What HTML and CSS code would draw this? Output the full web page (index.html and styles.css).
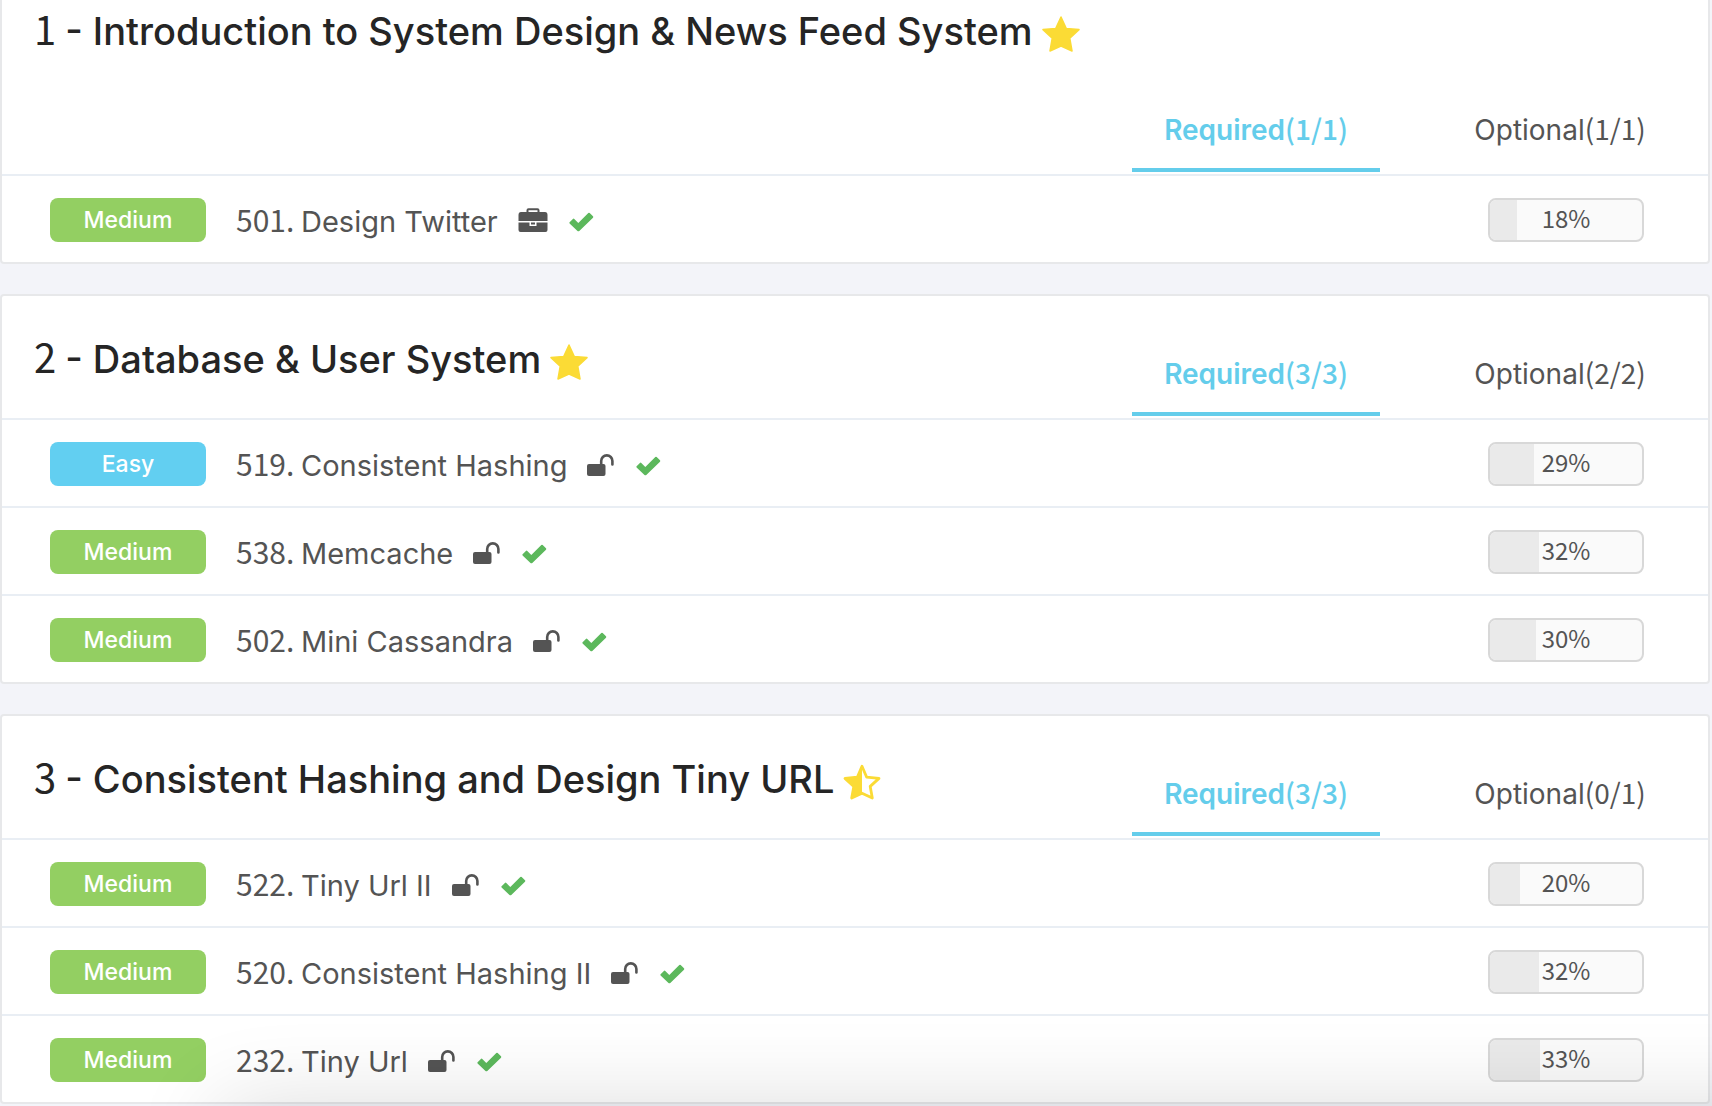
FILE: index.html
```html
<!DOCTYPE html>
<html lang="en">
<head>
<meta charset="utf-8">
<title>System Design Problems</title>
<link rel="stylesheet" href="styles.css">
</head>
<body>
<svg class="sprite" aria-hidden="true">
  <symbol id="star" viewBox="0 0 38 36"><path d="M19 1 24.2 12.4 37 13.6 27.8 22.3 30 35 19 30 8 35 10.2 22.3 1 13.6 13.8 12.4Z" fill="currentColor" stroke="currentColor" stroke-width="1.500" stroke-linejoin="round"/></symbol>
  <symbol id="star-half" viewBox="0 0 38 36"><path d="M19 2V29L8.500 34 10.500 22 2 14.200 14 13Z" fill="currentColor"/><path d="M19 2.200 23.700 13.200 36 14.400 27.200 22.400 29.300 34 19 29.200 8.700 34 10.800 22.400 2 14.400 14.300 13.200Z" fill="none" stroke="currentColor" stroke-width="2.800" stroke-linejoin="round"/></symbol>
  <symbol id="briefcase" viewBox="0 0 30 24"><path d="M9.500 5V2.200Q9.500 1.200 10.500 1.200H19.500Q20.500 1.200 20.500 2.200V5" fill="none" stroke="currentColor" stroke-width="2"/><path d="M3 4H27Q29.500 4 29.500 7V13H.5V7Q.5 4 3 4ZM.5 14.500H11.500V18H18.500V14.500H29.500V22Q29.500 24 27.500 24H2.500Q.5 24 .5 22ZM13 14.500H17V16.500H13Z" fill="currentColor"/></symbol>
  <symbol id="unlock" viewBox="0 0 28 22"><path d="M2 10H16.500Q18.500 10 18.500 12V20Q18.500 22 16.500 22H2Q0 22 0 20V12Q0 10 2 10Z" fill="currentColor"/><path d="M14.200 11V7A5.600 5.600 0 0 1 25.400 7V10.500" fill="none" stroke="currentColor" stroke-width="2.600" stroke-linecap="round"/></symbol>
  <symbol id="check" viewBox="0 0 25 20"><path d="M.6 10.200 3.900 6.900Q4.600 6.300 5.300 6.900L9.300 11 19.300 1Q20 .4 20.700 1L24 4.300Q24.600 5 24 5.700L10.300 18.900Q9.400 19.600 8.500 18.900L.6 11.400Q0 10.800 .6 10.200Z" fill="currentColor"/></symbol>
</svg>

<main class="chapters">
  <section class="card">
    <header class="card-head">
      <h2 class="title"><span class="num">1 </span>- Introduction to System Design &amp; News Feed System<svg class="star"><use href="#star"/></svg></h2>
      <div class="tabs">
        <button class="tab active" type="button">Required<span class="num">(1/1)</span></button>
        <button class="tab" type="button">Optional<span class="num">(1/1)</span></button>
      </div>
    </header>
    <ul class="problems">
      <li class="problem"><span class="badge medium">Medium</span><a class="name" href="#p501"><span class="num">501. </span>Design Twitter<svg class="kind briefcase"><use href="#briefcase"/></svg><svg class="done"><use href="#check"/></svg></a><div class="rate"><div class="fill" style="width:18%"></div><span class="pct">18%</span></div></li>
    </ul>
  </section>

  <section class="card">
    <header class="card-head">
      <h2 class="title"><span class="num">2 </span>- Database &amp; User System<svg class="star"><use href="#star"/></svg></h2>
      <div class="tabs">
        <button class="tab active" type="button">Required<span class="num">(3/3)</span></button>
        <button class="tab" type="button">Optional<span class="num">(2/2)</span></button>
      </div>
    </header>
    <ul class="problems">
      <li class="problem"><span class="badge easy">Easy</span><a class="name" href="#p519"><span class="num">519. </span>Consistent Hashing<svg class="kind"><use href="#unlock"/></svg><svg class="done"><use href="#check"/></svg></a><div class="rate"><div class="fill" style="width:29%"></div><span class="pct">29%</span></div></li>
      <li class="problem"><span class="badge medium">Medium</span><a class="name" href="#p538"><span class="num">538. </span>Memcache<svg class="kind"><use href="#unlock"/></svg><svg class="done"><use href="#check"/></svg></a><div class="rate"><div class="fill" style="width:32%"></div><span class="pct">32%</span></div></li>
      <li class="problem"><span class="badge medium">Medium</span><a class="name" href="#p502"><span class="num">502. </span>Mini Cassandra<svg class="kind"><use href="#unlock"/></svg><svg class="done"><use href="#check"/></svg></a><div class="rate"><div class="fill" style="width:30%"></div><span class="pct">30%</span></div></li>
    </ul>
  </section>

  <section class="card">
    <header class="card-head">
      <h2 class="title"><span class="num">3 </span>- Consistent Hashing and Design Tiny URL<svg class="star"><use href="#star-half"/></svg></h2>
      <div class="tabs">
        <button class="tab active" type="button">Required<span class="num">(3/3)</span></button>
        <button class="tab" type="button">Optional<span class="num">(0/1)</span></button>
      </div>
    </header>
    <ul class="problems">
      <li class="problem"><span class="badge medium">Medium</span><a class="name" href="#p522"><span class="num">522. </span>Tiny Url II<svg class="kind"><use href="#unlock"/></svg><svg class="done"><use href="#check"/></svg></a><div class="rate"><div class="fill" style="width:20%"></div><span class="pct">20%</span></div></li>
      <li class="problem"><span class="badge medium">Medium</span><a class="name" href="#p520"><span class="num">520. </span>Consistent Hashing II<svg class="kind"><use href="#unlock"/></svg><svg class="done"><use href="#check"/></svg></a><div class="rate"><div class="fill" style="width:32%"></div><span class="pct">32%</span></div></li>
      <li class="problem"><span class="badge medium">Medium</span><a class="name" href="#p232"><span class="num">232. </span>Tiny Url<svg class="kind"><use href="#unlock"/></svg><svg class="done"><use href="#check"/></svg></a><div class="rate"><div class="fill" style="width:33%"></div><span class="pct">33%</span></div></li>
    </ul>
  </section>
</main>
<div class="dock-shadow"></div>
</body>
</html>
```
FILE: styles.css
```css
* { box-sizing: border-box; }

body {
  margin: 0;
  background: #f3f4f9;
  color: #545454;
  font-family: Inter, "Noto Sans CJK SC", sans-serif;
  overflow-x: hidden;
}

.sprite { display: none; }

/* The list is scrolled a little way past the top of the first card. */
.chapters {
  display: flex;
  flex-direction: column;
  gap: 30px;
  margin: -34px 2px 0 0;
}

.card {
  background: #fff;
  border: 2px solid #e7e8ea;
  border-radius: 4px;
}

.card-head {
  display: flex;
  flex-wrap: wrap;
  align-items: flex-start;
}

.title {
  margin: 0 64px 0 0;
  padding: 42px 0 0 32px;
  font-size: 38px;
  font-weight: 500;
  line-height: 42px;
  color: #252525;
}

.num {
  font-family: "Noto Sans CJK SC", sans-serif;
  line-height: 0;
}

.title .num {
  font-size: 40px;
  font-weight: 400;
}

.star {
  width: 38px;
  height: 36px;
  margin-left: 9px;
  vertical-align: -7px;
  color: #fbdb35;
}

.tabs {
  display: flex;
  gap: 64px;
  margin-left: auto;
  padding: 40px 32px 2px 0;
}

.tab {
  width: 232px;
  padding: 0;
  border: 0;
  border-bottom: 4px solid transparent;
  background: none;
  color: #545454;
  font-family: inherit;
  font-size: 28px;
  line-height: 76px;
}

.tab.active {
  width: 248px;
  border-bottom-color: #64cdeb;
  color: #64cdeb;
  font-weight: 600;
}

.active .num { font-weight: 500; }

.problems {
  margin: 0;
  padding: 0;
  list-style: none;
}

.problem {
  display: flex;
  padding: 22px 64px 20px 48px;
  border-top: 2px solid #e9eef4;
}

.badge {
  width: 156px;
  border-radius: 8px;
  color: #fff;
  font-size: 23px;
  font-weight: 500;
  line-height: 44px;
  text-align: center;
}

.medium { background: #93cf62; }
.easy { background: #62cff1; }

.name {
  flex: 1;
  height: 44px;
  padding: 2px 0 0 30px;
  color: inherit;
  font-size: 29px;
  line-height: 44px;
  text-decoration: none;
}

.name .num { font-size: 30px; }

.kind {
  width: 28px;
  height: 22px;
  margin-left: 20px;
}

.briefcase {
  width: 30px;
  height: 24px;
}

.done {
  width: 25px;
  height: 20px;
  margin-left: 21px;
  color: #5cb85c;
}

.rate {
  position: relative;
  width: 156px;
  height: 44px;
  border: 2px solid #d8d8d8;
  border-radius: 8px;
  background: #fafafa;
  overflow: hidden;
}

.fill {
  height: 100%;
  background: #eaeaea;
}

.pct {
  position: absolute;
  inset: 0;
  font-family: "Noto Sans CJK SC", sans-serif;
  font-size: 24px;
  line-height: 36px;
  text-align: center;
}

/* Soft shade rising from the bottom edge of the window. */
.dock-shadow {
  position: fixed;
  top: 100%;
  left: 220px;
  right: -200px;
  height: 200px;
  box-shadow: 0 0 90px rgba(0, 0, 0, .14);
  pointer-events: none;
}
```
